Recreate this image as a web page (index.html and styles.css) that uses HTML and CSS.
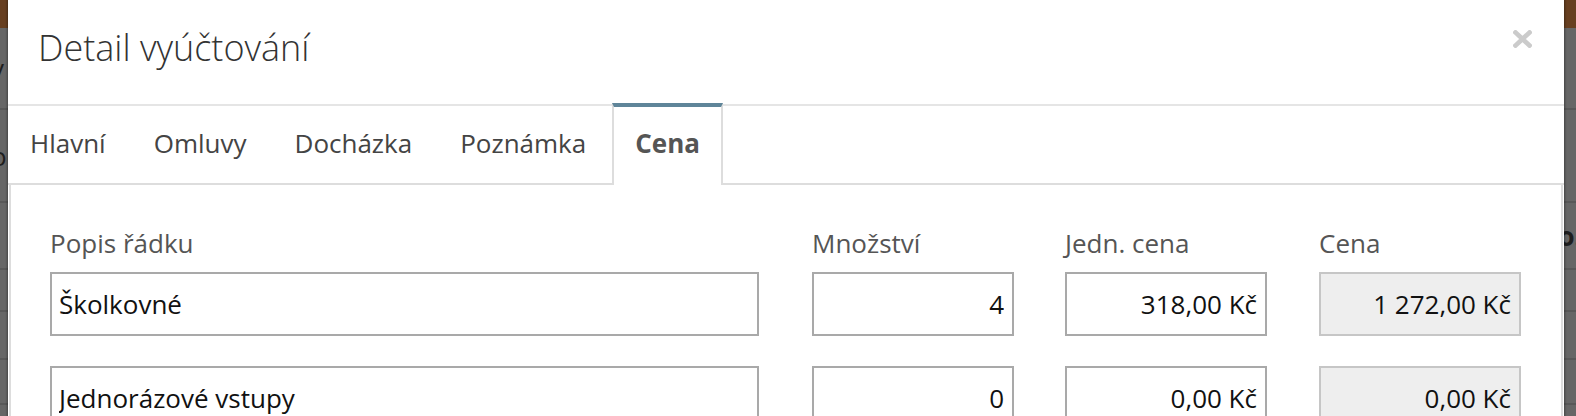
FILE: index.html
```html
<!DOCTYPE html>
<html lang="cs">
<head>
<meta charset="utf-8">
<title>Detail vyúčtování</title>
<link rel="stylesheet" href="styles.css">
</head>
<body>
<div class="bg-page">
  <div class="bg-top"></div>
  <div class="bg-row bg-row-a"><span class="frag-left">v</span></div>
  <div class="bg-row bg-row-b"><span class="frag-left">o</span></div>
  <div class="bg-row bg-row-c"><span class="frag-right">o.</span></div>
  <div class="bg-row bg-row-d"></div>
  <div class="bg-row bg-row-e"></div>
  <div class="bg-row bg-row-f"></div>
</div>

<div class="modal">
  <div class="modal-header">
    <h4 class="modal-title">Detail vyúčtování</h4>
    <button class="close" type="button" aria-label="Zavřít">
      <svg width="19" height="18" viewBox="0 0 19 18"><path d="M2.5 2.5 L16.5 15.5 M16.5 2.5 L2.5 15.5" stroke="#cbcbcb" stroke-width="4.6" stroke-linecap="square" fill="none"/></svg>
    </button>
  </div>
  <ul class="nav-tabs">
    <li class="tab">Hlavní</li>
    <li class="tab">Omluvy</li>
    <li class="tab">Docházka</li>
    <li class="tab">Poznámka</li>
    <li class="tab active">Cena</li>
  </ul>
  <div class="tab-content">
    <div class="grid labels">
      <label>Popis řádku</label>
      <label>Množství</label>
      <label>Jedn. cena</label>
      <label>Cena</label>
    </div>
    <div class="grid line">
      <input class="field" type="text" value="Školkovné">
      <input class="field num" type="text" value="4">
      <input class="field num" type="text" value="318,00 Kč">
      <input class="field num readonly" type="text" value="1 272,00 Kč" readonly>
    </div>
    <div class="grid line">
      <input class="field" type="text" value="Jednorázové vstupy">
      <input class="field num" type="text" value="0">
      <input class="field num" type="text" value="0,00 Kč">
      <input class="field num readonly" type="text" value="0,00 Kč" readonly>
    </div>
  </div>
</div>
</body>
</html>
```

FILE: styles.css
```css
* { box-sizing: border-box; }

html, body {
  margin: 0;
  padding: 0;
  height: 416px;
  overflow: hidden;
}

body {
  background: #666666;
  font-family: "Open Sans", "Noto Sans", sans-serif;
  position: relative;
}

/* dimmed page behind the modal */
.bg-page {
  width: 1576px;
}
.bg-top {
  height: 28px;
  background: #673f20;
}
.bg-row {
  border-bottom: 2px solid #585858;
  font-size: 26px;
  color: #1e1e1e;
  display: flex;
  justify-content: space-between;
  align-items: center;
  overflow: hidden;
}
.bg-row-a { height: 82px; }
.bg-row-b { height: 93px; }
.bg-row-c { height: 67px; justify-content: flex-end; }
.bg-row-d { height: 42px; }
.bg-row-e { height: 48px; }
.bg-row-f { height: 45px; }
.frag-left { margin-left: -9px; }
.frag-right { margin-right: -6px; font-weight: 700; }

/* modal */
.modal {
  position: absolute;
  top: 0;
  left: 8px;
  width: 1556px;
  height: 430px;
  background: #ffffff;
  box-shadow: 0 0 2px 1px rgba(0, 0, 0, 0.35);
}

.modal-header {
  height: 106px;
  border-bottom: 2px solid #e5e5e5;
  display: flex;
  justify-content: space-between;
  align-items: flex-start;
  padding: 0 32px 0 30px;
}

.modal-title {
  margin: 0;
  padding-top: 23px;
  font-size: 36px;
  line-height: 49px;
  font-weight: 300;
  color: #333333;
}

.close {
  margin-top: 30px;
  padding: 0;
  border: 0;
  background: none;
  width: 19px;
  height: 18px;
  display: block;
}
.close svg { display: block; }

.nav-tabs {
  list-style: none;
  margin: 0;
  padding: 0;
  display: flex;
  align-items: flex-start;
  height: 79px;
  border-bottom: 2px solid #dddddd;
}

.tab {
  padding: 19px 22px 21px;
  margin-right: 4px;
  font-size: 26px;
  line-height: 37px;
  color: #444444;
}

.tab.active {
  margin-top: -3px;
  padding: 18px 21px 23px;
  border-top: 4px solid #5f8599;
  border-left: 2px solid #dddddd;
  border-right: 2px solid #dddddd;
  background: #ffffff;
  font-weight: 700;
  color: #555555;
}

.tab-content {
  margin: 0 1px;
  border-left: 2px solid #dddddd;
  border-right: 2px solid #dddddd;
  padding: 40px 39px 0;
  height: 300px;
}

.grid {
  display: grid;
  grid-template-columns: 709px 202px 202px 202px;
  column-gap: 52px;
}
.grid > :nth-child(2) { margin-left: 1px; margin-right: -1px; }

.labels label {
  font-size: 26px;
  line-height: 37px;
  color: #555555;
  margin-bottom: 10px;
  display: block;
}

.line { margin-bottom: 30px; }

.field {
  display: block;
  width: 100%;
  height: 64px;
  margin: 0;
  border: 2px solid #a9a9a9;
  border-radius: 0;
  padding: 0 8px 0 7px;
  font-family: "Open Sans", "Noto Sans", sans-serif;
  font-size: 26px;
  line-height: 37px;
  color: #111111;
  background: #ffffff;
  outline: none;
}
.field.num { text-align: right; }
.field.readonly {
  background: #eeeeee;
  border-color: #c6c6c6;
}
```
